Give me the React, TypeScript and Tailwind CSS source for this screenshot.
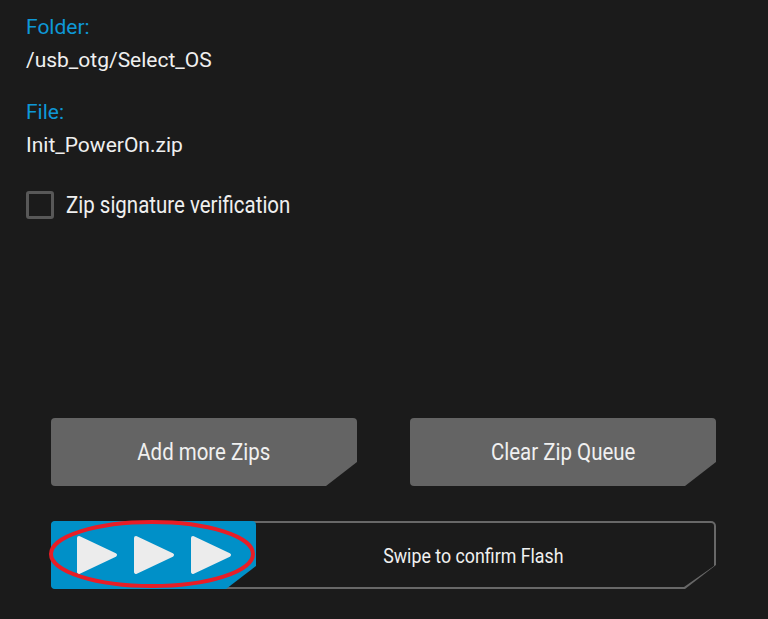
import React from "react";

const font = { fontFamily: "Roboto, 'Liberation Sans', sans-serif" };

function Arrow() {
  return (
    <svg width="42" height="40" viewBox="0 0 42 40" className="block">
      <polygon points="3,3 39,20 3,37" fill="#ececec" stroke="#ececec" strokeWidth="4" strokeLinejoin="round" />
    </svg>
  );
}

function ZipButton({ label }: { label: string }) {
  return (
    <button className="flex h-[68px] w-[306px] items-center justify-center rounded-[4px] bg-[#646464] pt-[2px] text-[23px] text-[#f0f0f0] [clip-path:polygon(0_0,306px_0,306px_44px,275px_68px,0_68px)]">
      <span className="inline-block scale-x-[0.89] whitespace-nowrap">{label}</span>
    </button>
  );
}

function SwipeBar() {
  return (
    <div className="relative h-[68px] w-[665px]">
      <div className="h-full w-full rounded-[5px] bg-[#686868] p-[2px] [clip-path:polygon(0_0,665px_0,665px_44px,634px_68px,0_68px)]">
        <div className="flex h-full w-full items-center rounded-[3px] bg-[#1b1b1b] [clip-path:polygon(0_0,661px_0,661px_43px,631px_64px,0_64px)]">
          <div className="w-[202px] shrink-0" />
          <div className="flex flex-1 justify-center pr-[22px] pt-[1px] text-[20px] text-[#f0f0f0]">
            <span className="inline-block scale-x-[0.89] whitespace-nowrap">Swipe to confirm Flash</span>
          </div>
        </div>
      </div>
      {/* slider handle */}
      <div className="absolute left-0 top-0 flex h-[68px] w-[205px] items-center gap-[15px] rounded-[4px] bg-[#0090c8] pl-[25px] [clip-path:polygon(0_0,205px_0,205px_45px,175px_68px,0_68px)]">
        <Arrow />
        <Arrow />
        <Arrow />
      </div>
      <svg className="pointer-events-none absolute left-[-3px] top-[-2px]" width="208" height="70" viewBox="0 0 208 70">
        <ellipse cx="104" cy="35" rx="101" ry="32" fill="none" stroke="#e81d26" strokeWidth="4" />
      </svg>
    </div>
  );
}

export default function App() {
  return (
    <div className="flex h-[619px] w-[768px] flex-col bg-[#1b1b1b] text-[#efefef]" style={font}>
      <div className="pl-[26px] pt-[11px] text-[21px] leading-[33px]">
        <div className="text-[#0e98d6]">Folder:</div>
        <div>/usb_otg/Select_OS</div>
        <div className="mt-[19px] text-[#0e98d6]">File:</div>
        <div>Init_PowerOn.zip</div>
        <div className="mt-[26px] flex items-center gap-[12px]">
          <div className="h-[28px] w-[28px] shrink-0 rounded-[3px] border-[3px] border-[#585858]" />
          <span className="inline-block origin-left scale-x-[0.89] whitespace-nowrap pt-[1px] text-[23px]">
            Zip signature verification
          </span>
        </div>
      </div>

      <div className="mt-auto flex flex-col gap-[35px] pb-[30px] pl-[51px]">
        <div className="flex gap-[53px]">
          <ZipButton label="Add more Zips" />
          <ZipButton label="Clear Zip Queue" />
        </div>
        <SwipeBar />
      </div>
    </div>
  );
}
